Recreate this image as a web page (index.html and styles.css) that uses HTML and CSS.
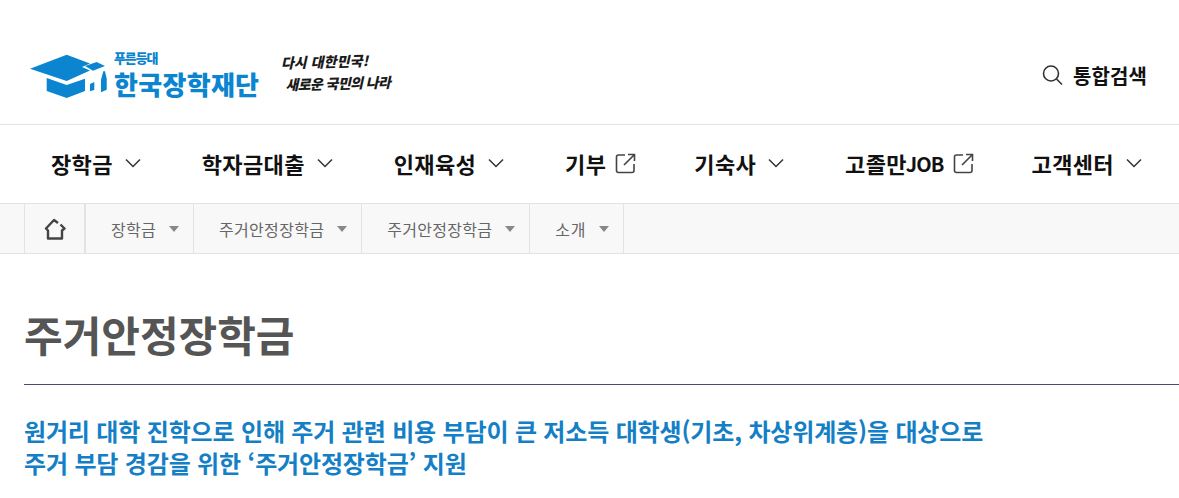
FILE: index.html
```html
<!DOCTYPE html>
<html lang="ko">
<head>
<meta charset="utf-8">
<title>주거안정장학금</title>
<link rel="stylesheet" href="styles.css">
</head>
<body>
<header class="top">
  <a class="logo">
    <svg class="cap" width="78" height="45" viewBox="0 0 78 45">
      <path d="M0 14.700 L36.700 .7 L60 9.500 L52 13 L60 16.500 L36.700 27 Z" fill="#0b85cf"/>
      <path d="M55 12 L66.700 8 L75 12 L63 16.700 Z" fill="#0b85cf"/>
      <path d="M16.700 24 L36.700 31 L55 24.700 V37 L36.700 44 L16.700 37 Z" fill="#0b85cf"/>
      <path d="M60 30 L64.300 28 V36 L60 37.300 Z M71 25.700 L73.300 17.300 H75 L76.700 24.700 V35.700 L71 38.300 Z" fill="#0b85cf"/>
    </svg>
    <span class="logo-text">
      <span class="logo-sub">푸른등대</span>
      <span class="logo-main">한국장학재단</span>
    </span>
  </a>
  <div class="slogan">
    <span class="slogan-a">다시 대한민국!</span>
    <span class="slogan-b">새로운 국민의 나라</span>
  </div>
  <a class="search">
    <svg width="21" height="22" viewBox="0 0 21 22" fill="none" stroke="#333" stroke-width="1.6"><circle cx="9" cy="9.500" r="7.500"/><path d="M14.500 15 L20 20.500"/></svg>
    <span>통합검색</span>
  </a>
</header>
<nav class="gnb">
  <a class="gnb-item">장학금<svg class="chev" viewBox="0 0 18 10"><path d="M2 1.500 L9 8.500 L16 1.500"/></svg></a>
  <a class="gnb-item">학자금대출<svg class="chev" viewBox="0 0 18 10"><path d="M2 1.500 L9 8.500 L16 1.500"/></svg></a>
  <a class="gnb-item">인재육성<svg class="chev" viewBox="0 0 18 10"><path d="M2 1.500 L9 8.500 L16 1.500"/></svg></a>
  <a class="gnb-item">기부<svg class="out" viewBox="0 0 21 21"><path d="M10 2 H3.500 Q1.500 2 1.500 4 V17.500 Q1.500 19.500 3.500 19.500 H17 Q19 19.500 19 17.500 V11 M13 1.500 H19.500 V8 M19.500 1.500 L9 12"/></svg></a>
  <a class="gnb-item">기숙사<svg class="chev" viewBox="0 0 18 10"><path d="M2 1.500 L9 8.500 L16 1.500"/></svg></a>
  <a class="gnb-item">고졸만<span class="latin">JOB</span><svg class="out" viewBox="0 0 21 21"><path d="M10 2 H3.500 Q1.500 2 1.500 4 V17.500 Q1.500 19.500 3.500 19.500 H17 Q19 19.500 19 17.500 V11 M13 1.500 H19.500 V8 M19.500 1.500 L9 12"/></svg></a>
  <a class="gnb-item">고객센터<svg class="chev" viewBox="0 0 18 10"><path d="M2 1.500 L9 8.500 L16 1.500"/></svg></a>
</nav>
<div class="crumbs">
  <a class="home"><svg width="22" height="22" viewBox="0 0 22 22" fill="none" stroke="#444" stroke-width="2.400" stroke-linejoin="round"><path d="M14 5 L10 2 L2 10.500 L4 12.500 V20.500 H18 V12.500 L20.500 10.500 L16.500 6.500"/></svg></a>
  <a class="crumb">장학금<i class="tri"></i></a>
  <a class="crumb">주거안정장학금<i class="tri"></i></a>
  <a class="crumb">주거안정장학금<i class="tri"></i></a>
  <a class="crumb crumb-last">소개<i class="tri"></i></a>
</div>
<main class="content">
  <h1 class="title">주거안정장학금</h1>
  <p class="lead">원거리 대학 진학으로 인해 주거 관련 비용 부담이 큰 저소득 대학생(기초, 차상위계층)을 대상으로<br>주거 부담 경감을 위한 ‘주거안정장학금’ 지원</p>
</main>
</body>
</html>
```
FILE: styles.css
```css
* { box-sizing: border-box; }
html, body { margin: 0; padding: 0; }
body {
  width: 1179px;
  height: 498px;
  overflow: hidden;
  background: #fff;
  font-family: "Noto Sans CJK KR", "Noto Sans", sans-serif;
  color: #111;
}
.top {
  height: 125px;
  border-bottom: 1px solid #e3e3e3;
  display: flex;
  align-items: center;
  padding: 28px 32px 0 30px;
}
.logo { display: flex; align-items: flex-start; width: 250px; height: 52px; }
.cap { flex: none; margin-top: 4px; }
.logo-text { display: flex; flex-direction: column; margin-left: 6px; color: #0b85cf; font-weight: 900; }
.logo-sub { font-size: 13px; line-height: 16px; letter-spacing: -1.100px; margin-bottom: 2px; }
.logo-main { font-size: 26px; line-height: 32px; letter-spacing: .3px; white-space: nowrap; }
.slogan {
  display: flex;
  flex-direction: column;
  margin: 0 0 8px 1px;
  font-size: 14px;
  line-height: 22px;
  font-weight: 900;
  font-style: italic;
  color: #1a1a1a;
  white-space: nowrap;
  transform: rotate(-1.500deg);
}
.slogan-a { letter-spacing: .1px; }
.slogan-b { letter-spacing: -.6px; margin-left: 4px; }
.search {
  margin-left: auto;
  margin-bottom: 2px;
  display: flex;
  align-items: center;
  gap: 10px;
  font-size: 20px;
  font-weight: 700;
}
.search span { letter-spacing: .1px; }
.gnb {
  height: 78px;
  display: flex;
  align-items: center;
  gap: 60px;
  padding: 0 0 2px 51px;
}
.gnb-item {
  display: flex;
  align-items: center;
  font-size: 22px;
  font-weight: 700;
  letter-spacing: .35px;
  white-space: nowrap;
}
.latin { font-size: 20px; letter-spacing: -.9px; margin-left: -1px; }
.chev { width: 18px; height: 10px; margin-left: 11px; fill: none; stroke: #333; stroke-width: 1.500; }
.out { width: 21px; height: 21px; margin: 0 -2px 0 9px; fill: none; stroke: #444; stroke-width: 1.600; }
.crumbs {
  height: 51px;
  display: flex;
  background: #f8f8f8;
  border-top: 1px solid #e3e3e3;
  border-bottom: 1px solid #e3e3e3;
  padding-left: 24px;
}
.home {
  width: 62px;
  display: flex;
  align-items: center;
  justify-content: center;
  border-left: 1px solid #e3e3e3;
  border-right: 2px solid #e3e3e3;
}
.crumb {
  display: flex;
  align-items: center;
  padding: 0 14px 0 25px;
  border-right: 1px solid #e3e3e3;
  font-size: 16px;
  letter-spacing: .3px;
  color: #666;
  white-space: nowrap;
}
.crumb-last { letter-spacing: .7px; }
.tri {
  width: 0;
  height: 0;
  margin-left: 13px;
  border-left: 5px solid transparent;
  border-right: 5px solid transparent;
  border-top: 6px solid #888;
}
.content { padding-left: 24px; }
.title {
  margin: 0;
  height: 131px;
  padding-top: 48px;
  border-bottom: 1px solid #4f4a6e;
  font-size: 42px;
  line-height: 64px;
  font-weight: 700;
  color: #555;
}
.lead {
  margin: 30px 0 0;
  font-size: 24px;
  line-height: 32px;
  font-weight: 700;
  color: #157fc6;
  letter-spacing: -.16px;
  white-space: nowrap;
}
```
